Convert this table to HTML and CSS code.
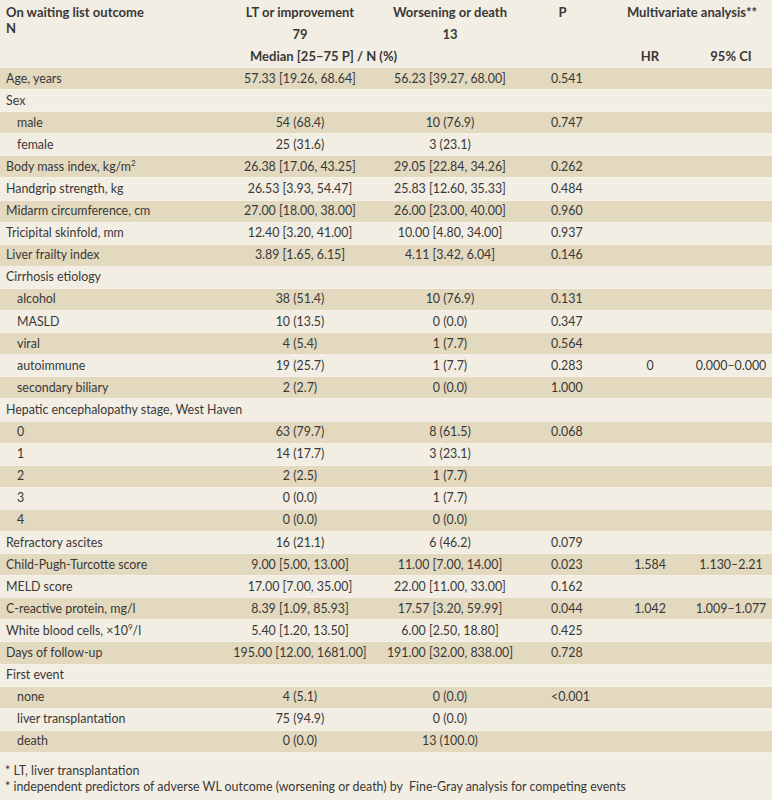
FILE: index.html
```html
<!DOCTYPE html>
<html>
<head>
    <title>On waiting list outcome</title>
    <link rel="stylesheet" href="styles.css">
</head>
<body>
    <table class="outcome-table">
        <colgroup>
            <col class="col-label">
            <col class="col-group">
            <col class="col-group">
            <col class="col-p">
            <col class="col-hr">
            <col class="col-ci">
        </colgroup>
        <thead>
            <tr class="head-top">
                <th class="head-label" rowspan="3">On waiting list outcome<br>N</th>
                <th>LT or improvement</th>
                <th>Worsening or death</th>
                <th>P</th>
                <th class="head-multi" colspan="2">Multivariate analysis**</th>
            </tr>
            <tr class="head-mid">
                <th>79</th>
                <th>13</th>
                <th></th>
                <th></th>
                <th></th>
            </tr>
            <tr class="head-bottom">
                <th class="head-median" colspan="3">Median [25–75 P] / N (%)</th>
                <th class="hr">HR</th>
                <th class="ci">95% CI</th>
            </tr>
        </thead>
        <tbody>
            <tr><td>Age, years</td><td>57.33 [19.26, 68.64]</td><td>56.23 [39.27, 68.00]</td><td class="p">0.541</td><td></td><td></td></tr>
            <tr><td>Sex</td><td></td><td></td><td class="p"></td><td></td><td></td></tr>
            <tr><td class="sub">male</td><td>54 (68.4)</td><td>10 (76.9)</td><td class="p">0.747</td><td></td><td></td></tr>
            <tr><td class="sub">female</td><td>25 (31.6)</td><td>3 (23.1)</td><td class="p"></td><td></td><td></td></tr>
            <tr><td>Body mass index, kg/m<sup>2</sup></td><td>26.38 [17.06, 43.25]</td><td>29.05 [22.84, 34.26]</td><td class="p">0.262</td><td></td><td></td></tr>
            <tr><td>Handgrip strength, kg</td><td>26.53 [3.93, 54.47]</td><td>25.83 [12.60, 35.33]</td><td class="p">0.484</td><td></td><td></td></tr>
            <tr><td>Midarm circumference, cm</td><td>27.00 [18.00, 38.00]</td><td>26.00 [23.00, 40.00]</td><td class="p">0.960</td><td></td><td></td></tr>
            <tr><td>Tricipital skinfold, mm</td><td>12.40 [3.20, 41.00]</td><td>10.00 [4.80, 34.00]</td><td class="p">0.937</td><td></td><td></td></tr>
            <tr><td>Liver frailty index</td><td>3.89 [1.65, 6.15]</td><td>4.11 [3.42, 6.04]</td><td class="p">0.146</td><td></td><td></td></tr>
            <tr><td>Cirrhosis etiology</td><td></td><td></td><td class="p"></td><td></td><td></td></tr>
            <tr><td class="sub">alcohol</td><td>38 (51.4)</td><td>10 (76.9)</td><td class="p">0.131</td><td></td><td></td></tr>
            <tr><td class="sub">MASLD</td><td>10 (13.5)</td><td>0 (0.0)</td><td class="p">0.347</td><td></td><td></td></tr>
            <tr><td class="sub">viral</td><td>4 (5.4)</td><td>1 (7.7)</td><td class="p">0.564</td><td></td><td></td></tr>
            <tr><td class="sub">autoimmune</td><td>19 (25.7)</td><td>1 (7.7)</td><td class="p">0.283</td><td class="hr">0</td><td class="ci">0.000–0.000</td></tr>
            <tr><td class="sub">secondary biliary</td><td>2 (2.7)</td><td>0 (0.0)</td><td class="p">1.000</td><td></td><td></td></tr>
            <tr><td>Hepatic encephalopathy stage, West Haven</td><td></td><td></td><td class="p"></td><td></td><td></td></tr>
            <tr><td class="sub">0</td><td>63 (79.7)</td><td>8 (61.5)</td><td class="p">0.068</td><td></td><td></td></tr>
            <tr><td class="sub">1</td><td>14 (17.7)</td><td>3 (23.1)</td><td class="p"></td><td></td><td></td></tr>
            <tr><td class="sub">2</td><td>2 (2.5)</td><td>1 (7.7)</td><td class="p"></td><td></td><td></td></tr>
            <tr><td class="sub">3</td><td>0 (0.0)</td><td>1 (7.7)</td><td class="p"></td><td></td><td></td></tr>
            <tr><td class="sub">4</td><td>0 (0.0)</td><td>0 (0.0)</td><td class="p"></td><td></td><td></td></tr>
            <tr><td>Refractory ascites</td><td>16 (21.1)</td><td>6 (46.2)</td><td class="p">0.079</td><td></td><td></td></tr>
            <tr><td>Child-Pugh-Turcotte score</td><td>9.00 [5.00, 13.00]</td><td>11.00 [7.00, 14.00]</td><td class="p">0.023</td><td class="hr">1.584</td><td class="ci">1.130–2.21</td></tr>
            <tr><td>MELD score</td><td>17.00 [7.00, 35.00]</td><td>22.00 [11.00, 33.00]</td><td class="p">0.162</td><td></td><td></td></tr>
            <tr><td>C-reactive protein, mg/l</td><td>8.39 [1.09, 85.93]</td><td>17.57 [3.20, 59.99]</td><td class="p">0.044</td><td class="hr">1.042</td><td class="ci">1.009–1.077</td></tr>
            <tr><td>White blood cells, ×10<sup>9</sup>/l</td><td>5.40 [1.20, 13.50]</td><td>6.00 [2.50, 18.80]</td><td class="p">0.425</td><td></td><td></td></tr>
            <tr><td>Days of follow-up</td><td>195.00 [12.00, 1681.00]</td><td>191.00 [32.00, 838.00]</td><td class="p">0.728</td><td></td><td></td></tr>
            <tr><td>First event</td><td></td><td></td><td class="p"></td><td></td><td></td></tr>
            <tr><td class="sub">none</td><td>4 (5.1)</td><td>0 (0.0)</td><td class="p">&lt;0.001</td><td></td><td></td></tr>
            <tr><td class="sub">liver transplantation</td><td>75 (94.9)</td><td>0 (0.0)</td><td class="p"></td><td></td><td></td></tr>
            <tr><td class="sub">death</td><td>0 (0.0)</td><td>13 (100.0)</td><td class="p"></td><td></td><td></td></tr>
        </tbody>
    </table>

    <div class="notes">
        <p>* LT, liver transplantation</p>
        <p>* independent predictors of adverse WL outcome (worsening or death) by &nbsp;Fine-Gray analysis for competing events</p>
    </div>
</body>
</html>
```

FILE: styles.css
```css
html, body {
    margin: 0;
    padding: 0;
    background: #f3eee3;
}

body {
    width: 772px;
    font-family: Lato, "Open Sans", sans-serif;
    font-size: 12.4px;
    color: #383838;
}

.outcome-table {
    width: 772px;
    border-collapse: collapse;
    table-layout: fixed;
}

.col-label { width: 225px; }
.col-group { width: 150px; }
.col-p { width: 75px; }
.col-hr { width: 95px; }
.col-ci { width: 77px; }

th {
    font-size: 13px;
    font-weight: bold;
    text-align: center;
    padding: 0;
    vertical-align: middle;
    line-height: 16px;
}

.head-top th { height: 24px; }
.head-mid th { height: 20px; }
.head-bottom th { height: 24px; }

.head-label {
    text-align: left;
    vertical-align: top;
    padding: 4px 0 0 6px;
}

.head-multi {
    padding-left: 12px;
}

.head-median {
    text-align: left;
    padding-left: 25px;
}

th.hr,
td.hr {
    padding-left: 5px;
}

th.ci,
td.ci {
    padding-right: 5px;
}

td {
    height: 21.1px;
    padding: 0;
    text-align: center;
    vertical-align: middle;
    line-height: 16px;
    white-space: nowrap;
    border-bottom: 1px solid #f6f2ea;
}

td:first-child {
    text-align: left;
    padding-left: 6px;
}

td.sub {
    padding-left: 17px;
}

td.p {
    text-align: left;
    padding-left: 26px;
}

tbody tr:nth-child(odd) {
    background: #e3d9bf;
}

sup {
    font-size: 8px;
    line-height: 0;
    vertical-align: 5px;
}

.notes {
    padding: 10px 0 0 5px;
}

.notes p {
    margin: 0;
    line-height: 16px;
}
```
